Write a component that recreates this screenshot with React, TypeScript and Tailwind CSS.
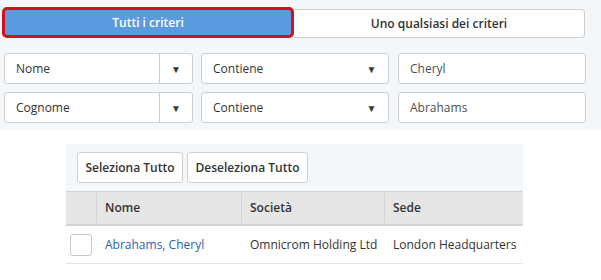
const font = { fontFamily: '"Open Sans", "Liberation Sans", sans-serif' };

function Caret() {
    return <span className="text-[10px] leading-none text-[#3a3a3a]">▼</span>;
}

function SelectBox({ value, width, divider }: { value: string; width: string; divider?: boolean }) {
    return (
        <div className={`${width} h-[31px] flex items-center bg-white border border-[#cfcfcf] rounded-[3px] text-[12px] text-[#333]`}>
            <span className="flex-1 pl-[11px]">{value}</span>
            <span className={`w-[33px] h-full flex items-center justify-center ${divider ? "border-l border-[#cfcfcf]" : ""}`}>
                <Caret />
            </span>
        </div>
    );
}

function TextBox({ value }: { value: string }) {
    return (
        <div className="w-[188px] h-[31px] flex items-center bg-white border border-[#cfcfcf] rounded-[3px] pl-[11px] text-[12px] text-[#4b4f56]">
            {value}
        </div>
    );
}

const rows = [
    { field: "Nome", op: "Contiene", value: "Cheryl" },
    { field: "Cognome", op: "Contiene", value: "Abrahams" },
];

export default function App() {
    return (
        <div className="w-[601px] h-[280px] bg-white overflow-hidden whitespace-nowrap" style={font}>
            {/* criteria panel */}
            <div className="h-[130px] bg-[#f4f7fa] pt-[7px]">
                <div className="flex items-start ml-[2px]">
                    <button className="w-[292px] h-[31px] bg-[#5a9bdf] border-[3px] border-[#d3101b] rounded-[5px] text-white text-[12px] font-semibold">
                        Tutti i criteri
                    </button>
                    <button className="w-[291px] h-[29px] mt-[2px] bg-white border border-[#cfcfcf] border-l-0 rounded-r-[4px] text-[#333] text-[12px] font-semibold">
                        Uno qualsiasi dei criteri
                    </button>
                </div>

                <div className="flex flex-col gap-[8px] mt-[15px] px-[4px]">
                    {rows.map((r) => (
                        <div key={r.field} className="flex items-center">
                            <SelectBox value={r.field} width="w-[189px]" divider />
                            <div className="ml-[8px]">
                                <SelectBox value={r.op} width="w-[188px]" />
                            </div>
                            <div className="ml-[9px]">
                                <TextBox value={r.value} />
                            </div>
                        </div>
                    ))}
                </div>
            </div>

            {/* results */}
            <div className="ml-[66px] mt-[14px] w-[457px]">
                <div className="h-[47px] bg-[#f4f7fa] flex items-start gap-[4px] pl-[11px] pt-[8px]">
                    <button className="w-[106px] h-[31px] bg-white border border-[#cfcfcf] rounded-[3px] text-[12px] font-semibold text-[#333]">
                        Seleziona Tutto
                    </button>
                    <button className="w-[121px] h-[31px] bg-white border border-[#cfcfcf] rounded-[3px] text-[12px] font-semibold text-[#333]">
                        Deseleziona Tutto
                    </button>
                </div>

                <div className="h-[35px] flex bg-[#e6e6e6] border-t border-b-2 border-[#d3d3d3] text-[12px] font-semibold text-[#333]">
                    <div className="w-[31px] border-r border-[#d3d3d3] my-[1px]" />
                    <div className="w-[145px] flex items-center pl-[8px] border-r border-[#d3d3d3] my-[1px]">Nome</div>
                    <div className="w-[143px] flex items-center pl-[8px] border-r border-[#d3d3d3] my-[1px]">Società</div>
                    <div className="flex-1 flex items-center pl-[8px]">Sede</div>
                </div>

                <div className="h-[38px] flex items-center border-b border-[#dbe5ee] text-[12px] text-[#333]">
                    <div className="w-[31px] flex items-center pl-[4px]">
                        <span className="w-[22px] h-[22px] bg-white border border-[#c8c8c8] rounded-[3px]" />
                    </div>
                    <div className="w-[145px] pl-[8px] text-[#2c5fa8]">Abrahams, Cheryl</div>
                    <div className="w-[143px] pl-[8px]">Omnicrom Holding Ltd</div>
                    <div className="flex-1 pl-[8px]">London Headquarters</div>
                </div>
            </div>
        </div>
    );
}
